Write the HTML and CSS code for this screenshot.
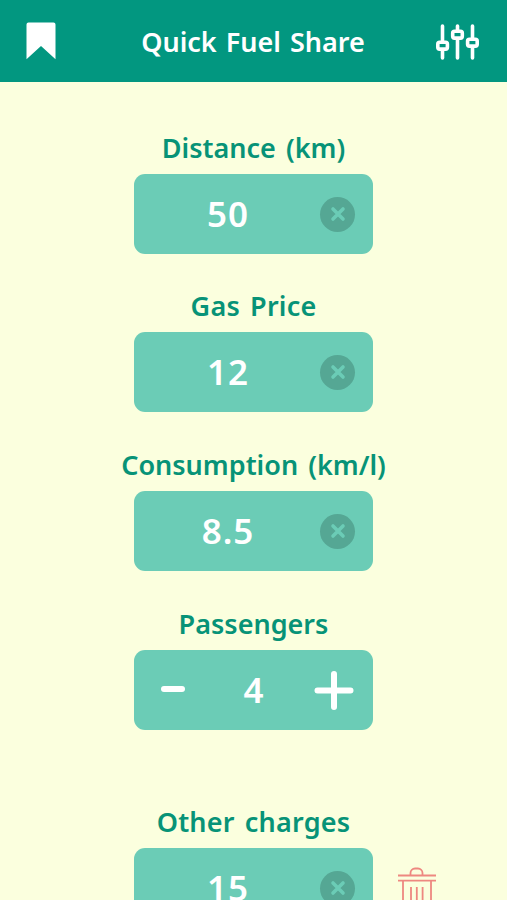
FILE: index.html
```
<!DOCTYPE html>
<html lang="en">
<head>
<meta charset="UTF-8">
<title>Quick Fuel Share</title>
<meta name="viewport" content="width=device-width, initial-scale=1.0">
<link rel="stylesheet" href="styles.css">
</head>
<body>

<header class="topbar">
  <button class="icon-btn" aria-label="Saved">
    <svg width="30" height="38" viewBox="0 0 30 38"><path fill="#fff" d="M2.500 .5h25a2 2 0 0 1 2 2v34.700L15 24 .5 37.200V2.500a2 2 0 0 1 2-2z"/></svg>
  </button>
  <h1>Quick Fuel Share</h1>
  <button class="icon-btn" aria-label="Settings">
    <svg width="44" height="38" viewBox="0 0 44 38" fill="none" stroke="#fff" stroke-width="3.600" stroke-linecap="round">
      <path d="M6.500 4v15M6.500 29v7M21.500 4v4M21.500 18v18M36.500 4v12M36.500 26v10"/>
      <rect x="1.800" y="20.300" width="9.600" height="6.800" rx="1.800"/>
      <rect x="16.700" y="9.300" width="9.600" height="6.800" rx="1.800"/>
      <rect x="31.600" y="17.300" width="9.600" height="6.800" rx="1.800"/>
    </svg>
  </button>
</header>

<main class="form">
  <section class="field">
    <h2>Distance (km)</h2>
    <div class="box">
      <span class="value">50</span>
      <button class="clear" aria-label="Clear"><svg width="16" height="16" viewBox="0 0 16 16"><path d="M3 3l10 10M13 3L3 13"/></svg></button>
    </div>
  </section>

  <section class="field price-field">
    <h2 class="wide">Gas Price</h2>
    <div class="box">
      <span class="value">12</span>
      <button class="clear" aria-label="Clear"><svg width="16" height="16" viewBox="0 0 16 16"><path d="M3 3l10 10M13 3L3 13"/></svg></button>
    </div>
  </section>

  <section class="field">
    <h2>Consumption (km/l)</h2>
    <div class="box">
      <span class="value decimal">8.5</span>
      <button class="clear" aria-label="Clear"><svg width="16" height="16" viewBox="0 0 16 16"><path d="M3 3l10 10M13 3L3 13"/></svg></button>
    </div>
  </section>

  <section class="field passengers-field">
    <h2>Passengers</h2>
    <div class="box stepper">
      <button class="step" aria-label="Less"><svg width="40" height="40" viewBox="0 0 40 40"><path d="M11 19h18"/></svg></button>
      <span class="count">4</span>
      <button class="step" aria-label="More"><svg width="40" height="40" viewBox="0 0 40 40"><path d="M3.500 20.500h33M20 4v33"/></svg></button>
    </div>
  </section>

  <section class="field">
    <h2 class="wide">Other charges</h2>
    <div class="row">
      <div class="box">
        <span class="value">15</span>
        <button class="clear" aria-label="Clear"><svg width="16" height="16" viewBox="0 0 16 16"><path d="M3 3l10 10M13 3L3 13"/></svg></button>
      </div>
      <button class="trash" aria-label="Remove">
        <svg width="40" height="44" viewBox="0 0 40 44" fill="none" stroke="#ee8880" stroke-width="1.800">
          <path d="M1 9.500h38M1 14.700h38M13.500 9V7A4.500 4.500 0 0 1 18 2.500h3A4.500 4.500 0 0 1 25.500 7v2M6 15v28h28V15M14 21v17M19.800 21v17M25.600 21v17"/>
        </svg>
      </button>
    </div>
  </section>
</main>

</body>
</html>
```
FILE: styles.css
```
* {
  box-sizing: border-box;
}

body {
  margin: 0;
  height: 100vh;
  overflow: hidden;
  background: #fbffde;
  font-family: "Noto Sans", "Open Sans", sans-serif;
}

button {
  border: 0;
  padding: 0;
  background: none;
  display: flex;
  align-items: center;
  justify-content: center;
}

.topbar {
  height: 82px;
  padding: 0 27px 0 26px;
  background: #029780;
  color: #fff;
  display: grid;
  grid-template-columns: 44px 1fr 44px;
  align-items: center;
}

.topbar .icon-btn:first-child {
  justify-content: flex-start;
}

.topbar h1 {
  margin: 0;
  padding-top: 2px;
  text-align: center;
  font-size: 27px;
  line-height: 36px;
  font-weight: 600;
  word-spacing: 2px;
  white-space: nowrap;
}

.form {
  padding-top: 48px;
  display: flex;
  flex-direction: column;
  align-items: center;
}

.field {
  display: flex;
  flex-direction: column;
  align-items: center;
  margin-bottom: 35px;
}

.price-field {
  margin-top: -1px;
}

.passengers-field {
  margin-bottom: 74px;
}

.field h2 {
  margin: 0 0 8px;
  font-size: 27px;
  line-height: 36px;
  font-weight: 600;
  color: #079377;
  word-spacing: 3px;
  white-space: nowrap;
}

.field .wide {
  letter-spacing: 0.2px;
}

.box {
  width: 239px;
  height: 80px;
  border-radius: 11px;
  background: #6bccb6;
  color: #fff;
  display: flex;
  align-items: center;
  padding: 0 18px 0 50px;
}

.value,
.count {
  font-size: 35px;
  line-height: 48px;
  font-weight: 600;
}

.value {
  width: 88px;
  text-align: center;
  letter-spacing: 1px;
}

.clear {
  width: 35px;
  height: 35px;
  margin-left: auto;
  border-radius: 50%;
  background: #55a794;
}

.clear path {
  fill: none;
  stroke: #6bccb6;
  stroke-width: 3.6;
  stroke-linecap: round;
}

.stepper {
  justify-content: space-between;
  padding: 0 19px;
}

.step path {
  fill: none;
  stroke: #fff;
  stroke-width: 6;
  stroke-linecap: round;
}

.row {
  display: grid;
  grid-template-columns: 40px 239px 40px;
  column-gap: 24px;
}

.row .box {
  grid-column: 2;
}

.trash {
  height: 80px;
}
```
